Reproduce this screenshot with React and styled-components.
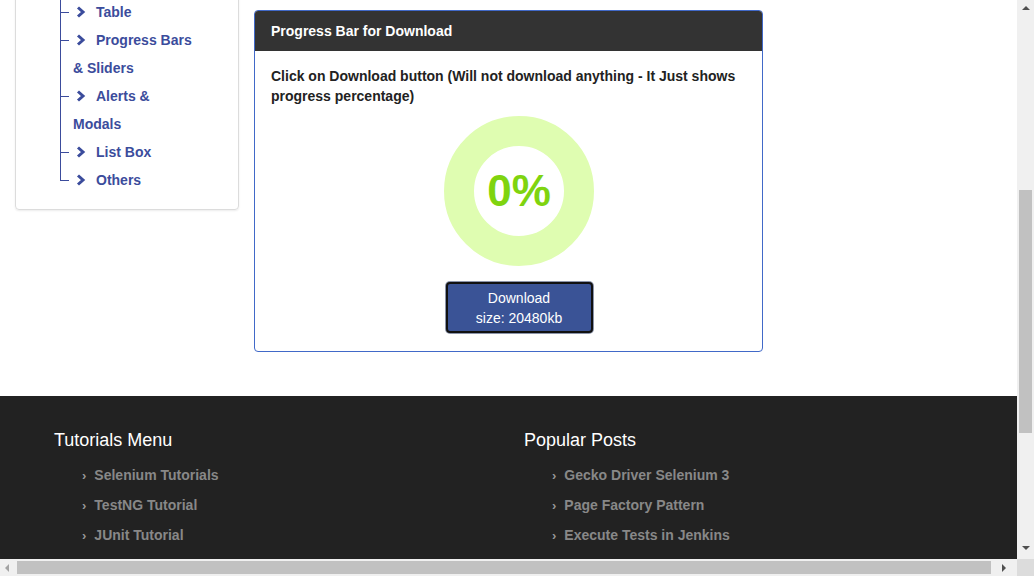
import styled, { createGlobalStyle } from "styled-components";

const GlobalStyle = createGlobalStyle`
  html, body {
    margin: 0;
    padding: 0;
    background: #fff;
    font-family: "Liberation Sans", Arial, sans-serif;
    overflow: hidden;
  }
`;

const sideLinks = ["Table", "Progress Bars & Sliders", "Alerts & Modals", "List Box", "Others"];
const tutorials = ["Selenium Tutorials", "TestNG Tutorial", "JUnit Tutorial"];
const posts = ["Gecko Driver Selenium 3", "Page Factory Pattern", "Execute Tests in Jenkins"];

function Chevron() {
  return (
    <ChevronIcon viewBox="0 0 10 12" width="10" height="12">
      <path d="M2 1.5 L7 6 L2 10.5" fill="none" stroke="currentColor" strokeWidth="3" />
    </ChevronIcon>
  );
}

function App() {
  return (
    <>
      <GlobalStyle />
      <Frame>
        <Viewport>
          <Content>
            <SideCard>
              <Tree>
                {sideLinks.map((t, i) => (
                  <TreeItem key={t} last={i === sideLinks.length - 1}>
                    <Chevron />
                    {t}
                  </TreeItem>
                ))}
              </Tree>
            </SideCard>
            <Panel>
              <PanelHead>Progress Bar for Download</PanelHead>
              <PanelBody>
                <Intro>
                  Click on Download button (Will not download anything - It Just shows
                  progress percentage)
                </Intro>
                <Centered>
                  <Ring>
                    <Percent>0%</Percent>
                  </Ring>
                  <DownloadButton>
                    Download
                    <br />
                    size: 20480kb
                  </DownloadButton>
                </Centered>
              </PanelBody>
            </Panel>
          </Content>
          <Footer>
            <FooterCol>
              <FooterTitle>Tutorials Menu</FooterTitle>
              <FooterList>
                {tutorials.map((t) => (
                  <FooterItem key={t}>{t}</FooterItem>
                ))}
              </FooterList>
            </FooterCol>
            <FooterCol>
              <FooterTitle>Popular Posts</FooterTitle>
              <FooterList>
                {posts.map((t) => (
                  <FooterItem key={t}>{t}</FooterItem>
                ))}
              </FooterList>
            </FooterCol>
          </Footer>
        </Viewport>
        <VScroll>
          <Arrow dir="up" />
          <VThumb />
          <Arrow dir="down" />
        </VScroll>
        <HScroll>
          <Arrow dir="left" />
          <HThumb />
          <Arrow dir="right" />
        </HScroll>
        <Corner />
      </Frame>
    </>
  );
}

export default App;

const Frame = styled.div`
  width: 1034px;
  height: 576px;
  display: grid;
  grid-template-columns: 1017px 17px;
  grid-template-rows: 559px 17px;
  overflow: hidden;
`;

const Viewport = styled.div`
  overflow: hidden;
  background: #fff;
`;

const Content = styled.div`
  display: flex;
  align-items: flex-start;
  gap: 15px;
  padding-left: 15px;
  height: 396px;
`;

const SideCard = styled.div`
  width: 224px;
  box-sizing: border-box;
  margin-top: -31px;
  padding: 28px 42px 15px 44px;
  border: 1px solid #dcdcdc;
  border-radius: 4px;
  box-shadow: 0 1px 2px rgba(0, 0, 0, 0.08);
`;

const Tree = styled.ul`
  list-style: none;
  margin: 0;
  padding: 0 0 0 13px;
`;

const TreeItem = styled.li`
  position: relative;
  font-size: 14px;
  font-weight: bold;
  line-height: 28px;
  color: #3b4c9c;

  &::before {
    content: "";
    position: absolute;
    left: -13px;
    top: 0;
    width: 8px;
    height: 14px;
    border-left: 1px solid #3b4c9c;
    border-bottom: 1px solid #3b4c9c;
  }

  &::after {
    content: "";
    position: absolute;
    left: -13px;
    top: 14px;
    bottom: 0;
    border-left: 1px solid #3b4c9c;
    display: ${(p) => (p.last ? "none" : "block")};
  }
`;

const ChevronIcon = styled.svg`
  display: inline-block;
  vertical-align: -1px;
  margin: 0 10px 0 3px;
`;

const Panel = styled.div`
  width: 509px;
  box-sizing: border-box;
  margin-top: 10px;
  border: 1px solid #4169c8;
  border-radius: 4px;
  overflow: hidden;
`;

const PanelHead = styled.div`
  height: 40px;
  line-height: 40px;
  background: #333;
  color: #fff;
  font-size: 14px;
  font-weight: bold;
  padding-left: 16px;
`;

const PanelBody = styled.div`
  padding: 15px 15px 18px 16px;
`;

const Intro = styled.p`
  margin: 0;
  font-size: 14px;
  font-weight: bold;
  line-height: 20px;
  color: #222;
`;

const Centered = styled.div`
  display: flex;
  flex-direction: column;
  align-items: center;
  padding-left: 20px;
`;

const Ring = styled.div`
  width: 150px;
  height: 150px;
  box-sizing: border-box;
  margin-top: 10px;
  border: 30px solid #dffdb1;
  border-radius: 50%;
  display: flex;
  align-items: center;
  justify-content: center;
`;

const Percent = styled.span`
  font-size: 44px;
  font-weight: bold;
  color: #7fd40f;
  line-height: 1;
`;

const DownloadButton = styled.button`
  margin-top: 16px;
  width: 147px;
  height: 51px;
  background: #3a5396;
  color: #fff;
  font-family: "Liberation Sans", Arial, sans-serif;
  font-size: 14px;
  line-height: 20px;
  border: 2px solid #111;
  border-radius: 4px;
  box-shadow: 0 0 0 1px #8b94aa;
  padding: 0;
`;

const Footer = styled.footer`
  height: 200px;
  background: #222;
  display: grid;
  grid-template-columns: 470px 470px;
  padding: 34px 0 0 54px;
  box-sizing: border-box;
`;

const FooterCol = styled.div``;

const FooterTitle = styled.h3`
  margin: 0;
  font-size: 18px;
  font-weight: normal;
  line-height: 20px;
  color: #fff;
`;

const FooterList = styled.ul`
  list-style: none;
  margin: 10px 0 0;
  padding: 0 0 0 28px;
`;

const FooterItem = styled.li`
  height: 30px;
  font-size: 14px;
  font-weight: bold;
  line-height: 30px;
  color: #888;

  &::before {
    content: "›";
    font-size: 13px;
    margin-right: 8px;
    color: #999;
  }
`;

const VScroll = styled.div`
  background: #f0f0f0;
  position: relative;
`;

const VThumb = styled.div`
  position: absolute;
  top: 190px;
  left: 2px;
  width: 13px;
  height: 243px;
  background: #c1c1c1;
`;

const HScroll = styled.div`
  background: #f0f0f0;
  position: relative;
`;

const HThumb = styled.div`
  position: absolute;
  left: 17px;
  top: 2px;
  width: 974px;
  height: 13px;
  background: #c1c1c1;
`;

const Corner = styled.div`
  background: #dcdcdc;
`;

const arrowStyles = {
  up: "top: 6px; left: 5px; border-width: 0 4px 4px; border-color: transparent transparent #505050;",
  down: "bottom: 9px; left: 5px; border-width: 4px 4px 0; border-color: #505050 transparent transparent;",
  left: "left: 5px; top: 5px; border-width: 4px 4px 4px 0; border-color: transparent #a3a3a3 transparent transparent;",
  right: "right: 11px; top: 5px; border-width: 4px 0 4px 4px; border-color: transparent transparent transparent #505050;",
};

const Arrow = styled.span`
  position: absolute;
  width: 0;
  height: 0;
  border-style: solid;
  ${(p) => arrowStyles[p.dir]}
`;
